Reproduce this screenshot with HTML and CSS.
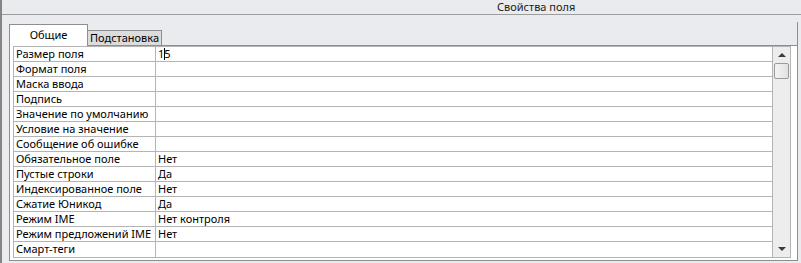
FILE: index.html
```html
<!DOCTYPE html>
<html>
<head>
    <title>Свойства поля</title>
    <link rel="stylesheet" href="styles.css">
</head>
<body>
    <div class="pane">
        <div class="pane-title">Свойства поля</div>

        <div class="tabs-area">
            <div class="tab-strip">
                <div class="tab active">Общие</div>
                <div class="tab">Подстановка</div>
                <div class="tab-filler"></div>
            </div>

            <div class="tab-panel">
                <div class="grid">
                    <div class="rows">
                        <div class="row"><div class="name">Размер поля</div><div class="value">1<span class="caret"></span>5</div></div>
                        <div class="row"><div class="name">Формат поля</div><div class="value"></div></div>
                        <div class="row"><div class="name">Маска ввода</div><div class="value"></div></div>
                        <div class="row"><div class="name">Подпись</div><div class="value"></div></div>
                        <div class="row"><div class="name">Значение по умолчанию</div><div class="value"></div></div>
                        <div class="row"><div class="name">Условие на значение</div><div class="value"></div></div>
                        <div class="row"><div class="name">Сообщение об ошибке</div><div class="value"></div></div>
                        <div class="row"><div class="name">Обязательное поле</div><div class="value">Нет</div></div>
                        <div class="row"><div class="name">Пустые строки</div><div class="value">Да</div></div>
                        <div class="row"><div class="name">Индексированное поле</div><div class="value">Нет</div></div>
                        <div class="row"><div class="name">Сжатие Юникод</div><div class="value">Да</div></div>
                        <div class="row"><div class="name">Режим IME</div><div class="value">Нет контроля</div></div>
                        <div class="row"><div class="name">Режим предложений IME</div><div class="value">Нет</div></div>
                        <div class="row"><div class="name">Смарт-теги</div><div class="value"></div></div>
                    </div>

                    <div class="scrollbar">
                        <div class="arrow up"></div>
                        <div class="thumb"></div>
                        <div class="track"></div>
                        <div class="arrow down"></div>
                    </div>
                </div>
            </div>
        </div>
    </div>
</body>
</html>
```

FILE: styles.css
```css
* {
    margin: 0;
    padding: 0;
    box-sizing: border-box;
}

body {
    font-family: "Noto Sans", "Open Sans", sans-serif;
    font-size: 11px;
    color: #000;
    background-color: #e9ebee;
}

.pane {
    height: 263px;
    border-left: 2px solid #858585;
}

.pane-title {
    height: 15px;
    line-height: 13px;
    padding-left: 495px;
    color: #222;
    border-bottom: 1px solid #9d9d9d;
}

.tabs-area {
    margin: 7px 3px 0 7px;
}

/* Tabs */
.tab-strip {
    display: flex;
    align-items: flex-end;
    height: 24px;
}

.tab {
    height: 16px;
    padding: 0 2px;
    line-height: 14px;
    background-color: #dcdcdc;
    border: 1px solid #8e8e8e;
    border-left: none;
}

.tab.active {
    width: 79px;
    height: 22px;
    line-height: 20px;
    text-align: center;
    background-color: white;
    border-left: 1px solid #8e8e8e;
    border-bottom: none;
}

.tab-filler {
    flex: 1;
    align-self: stretch;
    border-bottom: 1px solid #8e8e8e;
    border-right: 1px solid #8e8e8e;
}

.tab-panel {
    background-color: white;
    border: 1px solid #8e8e8e;
    border-top: none;
    padding: 0 6px 2px 3px;
}

/* Property grid */
.grid {
    display: flex;
    border: 1px solid #b4b4b4;
}

.rows {
    flex: 1;
    border-right: 1px solid #b4b4b4;
}

.row {
    display: flex;
    height: 15px;
    line-height: 14px;
    border-bottom: 1px solid #b4b4b4;
}

.row:last-child {
    border-bottom: none;
}

.name {
    width: 142px;
    padding-left: 2px;
    border-right: 1px solid #b4b4b4;
    white-space: nowrap;
}

.value {
    flex: 1;
    padding-left: 2px;
}

.caret {
    display: inline-block;
    width: 1px;
    height: 12px;
    margin-right: -1px;
    vertical-align: -2px;
    background-color: black;
}

/* Scrollbar */
.scrollbar {
    width: 17px;
    display: flex;
    flex-direction: column;
    background-color: #ededed;
}

.arrow {
    height: 16px;
    display: flex;
    align-items: center;
    justify-content: center;
}

.arrow::before {
    content: "";
    width: 0;
    height: 0;
    border-left: 4px solid transparent;
    border-right: 4px solid transparent;
}

.arrow.up::before {
    border-bottom: 4px solid #3a3a3a;
}

.arrow.down::before {
    border-top: 4px solid #3a3a3a;
}

.thumb {
    height: 16px;
    margin: 0 1px;
    border: 1px solid #9a9a9a;
    border-radius: 2px;
    background: linear-gradient(to right, #f4f4f4, #e2e2e2);
}

.track {
    flex: 1;
}
```
